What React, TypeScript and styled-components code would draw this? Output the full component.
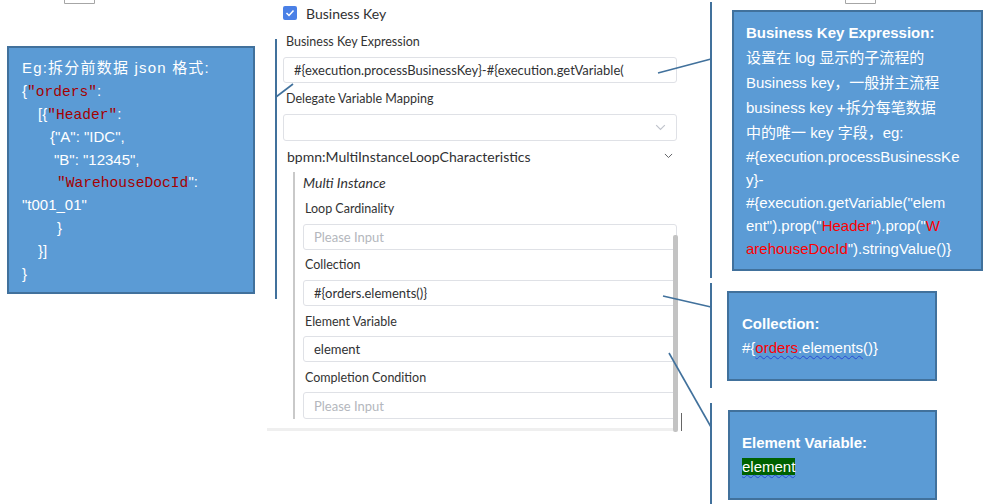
import React from "react";
import styled, { createGlobalStyle } from "styled-components";

const Global = createGlobalStyle`
  html, body { margin: 0; padding: 0; background: #ffffff; }
  body { width: 992px; height: 504px; overflow: hidden; }
`;

const Page = styled.div`
  position: relative;
  width: 992px;
  height: 504px;
  display: flex;
  align-items: flex-start;
  background: #ffffff;
`;

/* ---------- callout boxes ---------- */
const Callout = styled.div<{ $w: number; $h: number; $mt: number; $ml: number; $pt: number; $pl: number }>`
  box-sizing: border-box;
  width: ${(p) => p.$w}px;
  height: ${(p) => p.$h}px;
  margin-top: ${(p) => p.$mt}px;
  margin-left: ${(p) => p.$ml}px;
  padding: ${(p) => p.$pt}px 0 0 ${(p) => p.$pl}px;
  background: #5b9bd5;
  border: 2px solid #41719c;
  color: #ffffff;
  font-family: "Liberation Sans", "Noto Sans CJK SC", sans-serif;
  font-size: 15px;
  flex-shrink: 0;
`;

const JsonLine = styled.div<{ $indent: number; $wide?: boolean }>`
  height: 22.9px;
  line-height: 22.9px;
  padding-left: ${(p) => p.$indent}px;
  white-space: pre;
  letter-spacing: ${(p) => (p.$wide ? "1.2px" : "0")};
`;

const Code = styled.span`
  font-family: "Liberation Mono", "DejaVu Sans Mono", monospace;
  font-size: 14.6px;
  color: #a50000;
`;

const Ln = styled.div<{ $h: number; $bold?: boolean }>`
  height: ${(p) => p.$h}px;
  line-height: ${(p) => p.$h}px;
  white-space: pre;
  font-weight: ${(p) => (p.$bold ? 700 : 400)};
`;

const Red = styled.span`
  color: #ff0000;
`;

const Wavy = styled.span`
  text-decoration: underline wavy #2a4bd7;
  text-decoration-thickness: 1px;
  text-underline-offset: 2px;
`;

const Highlight = styled(Wavy)`
  background: #006100;
`;

const RightCol = styled.div`
  display: flex;
  flex-direction: column;
  margin-left: 50px;
`;

/* ---------- form panel ---------- */
const Form = styled.div`
  position: relative;
  box-sizing: border-box;
  width: 410px;
  margin-left: 12px;
  padding-left: 16px;
  font-family: "Lato", "Liberation Sans", sans-serif;
  color: #303133;
  flex-shrink: 0;
`;

const CheckRow = styled.div`
  height: 26px;
  display: flex;
  align-items: center;
  gap: 9px;
  font-size: 14px;
`;

const CheckBox = styled.span`
  width: 14px;
  height: 14px;
  border-radius: 2px;
  background: #4a80e6;
  display: inline-flex;
  align-items: center;
  justify-content: center;
`;

const Label = styled.div<{ $h: number; $pl: number }>`
  height: ${(p) => p.$h}px;
  display: flex;
  align-items: center;
  padding-left: ${(p) => p.$pl}px;
  font-size: 12.5px;
  color: #333333;
`;

const Field = styled.div<{ $placeholder?: boolean }>`
  box-sizing: border-box;
  height: 26.3px;
  border: 1px solid #dfe1e6;
  border-radius: 3px;
  display: flex;
  align-items: center;
  justify-content: space-between;
  padding: 0 10px 0 10px;
  font-size: 13px;
  white-space: nowrap;
  overflow: hidden;
  color: ${(p) => (p.$placeholder ? "#b4b7bd" : "#303133")};
`;

const GroupHeader = styled.div`
  height: 31px;
  display: flex;
  align-items: center;
  justify-content: space-between;
  padding: 0 4px 0 4px;
  font-size: 14px;
  color: #303133;
`;

const Section = styled.div`
  margin-left: 10px;
  border-left: 2px solid #c9c9c9;
  padding-left: 8px;
`;

const SectionTitle = styled.div`
  height: 21px;
  display: flex;
  align-items: center;
  font-size: 14px;
  font-style: italic;
  color: #303133;
`;

const BottomBar = styled.div`
  height: 3px;
  margin: 9px 0 0 -16px;
  width: 406px;
  background: #efefef;
`;

const ScrollThumb = styled.div`
  position: absolute;
  left: 406px;
  top: 235px;
  width: 5px;
  height: 197px;
  background: #c3c3c3;
  border-radius: 2px;
`;

const Overlay = styled.svg`
  position: absolute;
  left: 0;
  top: 0;
  pointer-events: none;
`;

const Chevron = ({ color, w }: { color: string; w: number }) => (
  <svg width={w} height={w / 2 + 1} viewBox="0 0 10 6">
    <polyline points="1,1 5,5 9,1" fill="none" stroke={color} strokeWidth="1.1" />
  </svg>
);

export default function App() {
  return (
    <>
      <Global />
      <Page>
        <Callout $w={248} $h={248} $mt={46} $ml={7} $pt={9} $pl={13}>
          <JsonLine $indent={0} $wide>Eg:拆分前数据 json 格式:</JsonLine>
          <JsonLine $indent={0}>
            {"{"}
            <Code>"orders"</Code>:
          </JsonLine>
          <JsonLine $indent={16}>
            {"[{"}
            <Code>"Header"</Code>:
          </JsonLine>
          <JsonLine $indent={28}>{'{"A": "IDC",'}</JsonLine>
          <JsonLine $indent={32}>{'"B": "12345",'}</JsonLine>
          <JsonLine $indent={35}>
            <Code>"WarehouseDocId</Code>":
          </JsonLine>
          <JsonLine $indent={0}>"t001_01"</JsonLine>
          <JsonLine $indent={35}>{"}"}</JsonLine>
          <JsonLine $indent={16}>{"}]"}</JsonLine>
          <JsonLine $indent={0}>{"}"}</JsonLine>
        </Callout>

        <Form>
          <CheckRow>
            <CheckBox>
              <svg width="10" height="8" viewBox="0 0 10 8">
                <polyline points="1.5,4 4,6.5 8.5,1.5" fill="none" stroke="#ffffff" strokeWidth="1.5" />
              </svg>
            </CheckBox>
            Business Key
          </CheckRow>
          <Label $h={31} $pl={3}>Business Key Expression</Label>
          <Field>#{"{"}execution.processBusinessKey{"}"}-#{"{"}execution.getVariable(</Field>
          <Label $h={31} $pl={3}>Delegate Variable Mapping</Label>
          <Field>
            <span />
            <Chevron color="#c0c4cc" w={11} />
          </Field>
          <GroupHeader>
            bpmn:MultiInstanceLoopCharacteristics
            <Chevron color="#606266" w={9} />
          </GroupHeader>
          <Section>
            <SectionTitle>Multi Instance</SectionTitle>
            <Label $h={31} $pl={2}>Loop Cardinality</Label>
            <Field $placeholder>Please Input</Field>
            <Label $h={30} $pl={2}>Collection</Label>
            <Field>#{"{"}orders.elements(){"}"}</Field>
            <Label $h={30} $pl={2}>Element Variable</Label>
            <Field>element</Field>
            <Label $h={30} $pl={2}>Completion Condition</Label>
            <Field $placeholder>Please Input</Field>
          </Section>
          <BottomBar />
          <ScrollThumb />
        </Form>

        <RightCol>
          <Callout $w={251} $h={261} $mt={10} $ml={5} $pt={8} $pl={12}>
            <Ln $h={25} $bold>Business Key Expression:</Ln>
            <Ln $h={25}>设置在 log 显示的子流程的</Ln>
            <Ln $h={25}>Business key，一般拼主流程</Ln>
            <Ln $h={25}>business key +拆分每笔数据</Ln>
            <Ln $h={25}>中的唯一 key 字段，eg:</Ln>
            <Ln $h={23}>#{"{"}execution.processBusinessKe</Ln>
            <Ln $h={23}>y{"}"}-</Ln>
            <Ln $h={23}>#{"{"}execution.getVariable("elem</Ln>
            <Ln $h={23}>
              ent").prop("<Red>Header</Red>").prop("<Red>W</Red>
            </Ln>
            <Ln $h={23}>
              <Red>arehouseDocId</Red>").stringValue(){"}"}
            </Ln>
          </Callout>
          <Callout $w={210} $h={90} $mt={20} $ml={0} $pt={18} $pl={13}>
            <Ln $h={25} $bold>Collection:</Ln>
            <Ln $h={23}>
              #{"{"}
              <Wavy>
                <Red>orders</Red>.elements
              </Wavy>
              (){"}"}
            </Ln>
          </Callout>
          <Callout $w={209} $h={90} $mt={29} $ml={1} $pt={17.5} $pl={12}>
            <Ln $h={25} $bold>Element Variable:</Ln>
            <Ln $h={23}>
              <Highlight>element</Highlight>
            </Ln>
          </Callout>
        </RightCol>

        <Overlay width={992} height={504} viewBox="0 0 992 504">
          {/* small gray tabs at top */}
          <polyline points="64.5,0 64.5,3.5 94.5,3.5 94.5,0" fill="none" stroke="#a6a6a6" strokeWidth="1" />
          <polyline points="845.5,0 845.5,3.5 875.5,3.5 875.5,0" fill="none" stroke="#a6a6a6" strokeWidth="1" />
          {/* left callout accent bar and pointer */}
          <line x1="276" y1="39" x2="276" y2="299" stroke="#41719c" strokeWidth="2" />
          <line x1="276" y1="97" x2="293" y2="84" stroke="#41719c" strokeWidth="1.6" />
          {/* right callout accent bars and pointers */}
          <line x1="711" y1="2" x2="711" y2="278" stroke="#41719c" strokeWidth="2" />
          <line x1="711" y1="59" x2="658" y2="73" stroke="#41719c" strokeWidth="1.6" />
          <line x1="711" y1="283" x2="711" y2="388" stroke="#41719c" strokeWidth="2" />
          <line x1="711" y1="307" x2="663" y2="296" stroke="#41719c" strokeWidth="1.6" />
          <line x1="711" y1="403" x2="711" y2="504" stroke="#41719c" strokeWidth="2" />
          <line x1="669" y1="353" x2="711" y2="427" stroke="#41719c" strokeWidth="1.6" />
          {/* text caret mark */}
          <line x1="681.5" y1="413" x2="681.5" y2="431" stroke="#666666" strokeWidth="1" />
        </Overlay>
      </Page>
    </>
  );
}
